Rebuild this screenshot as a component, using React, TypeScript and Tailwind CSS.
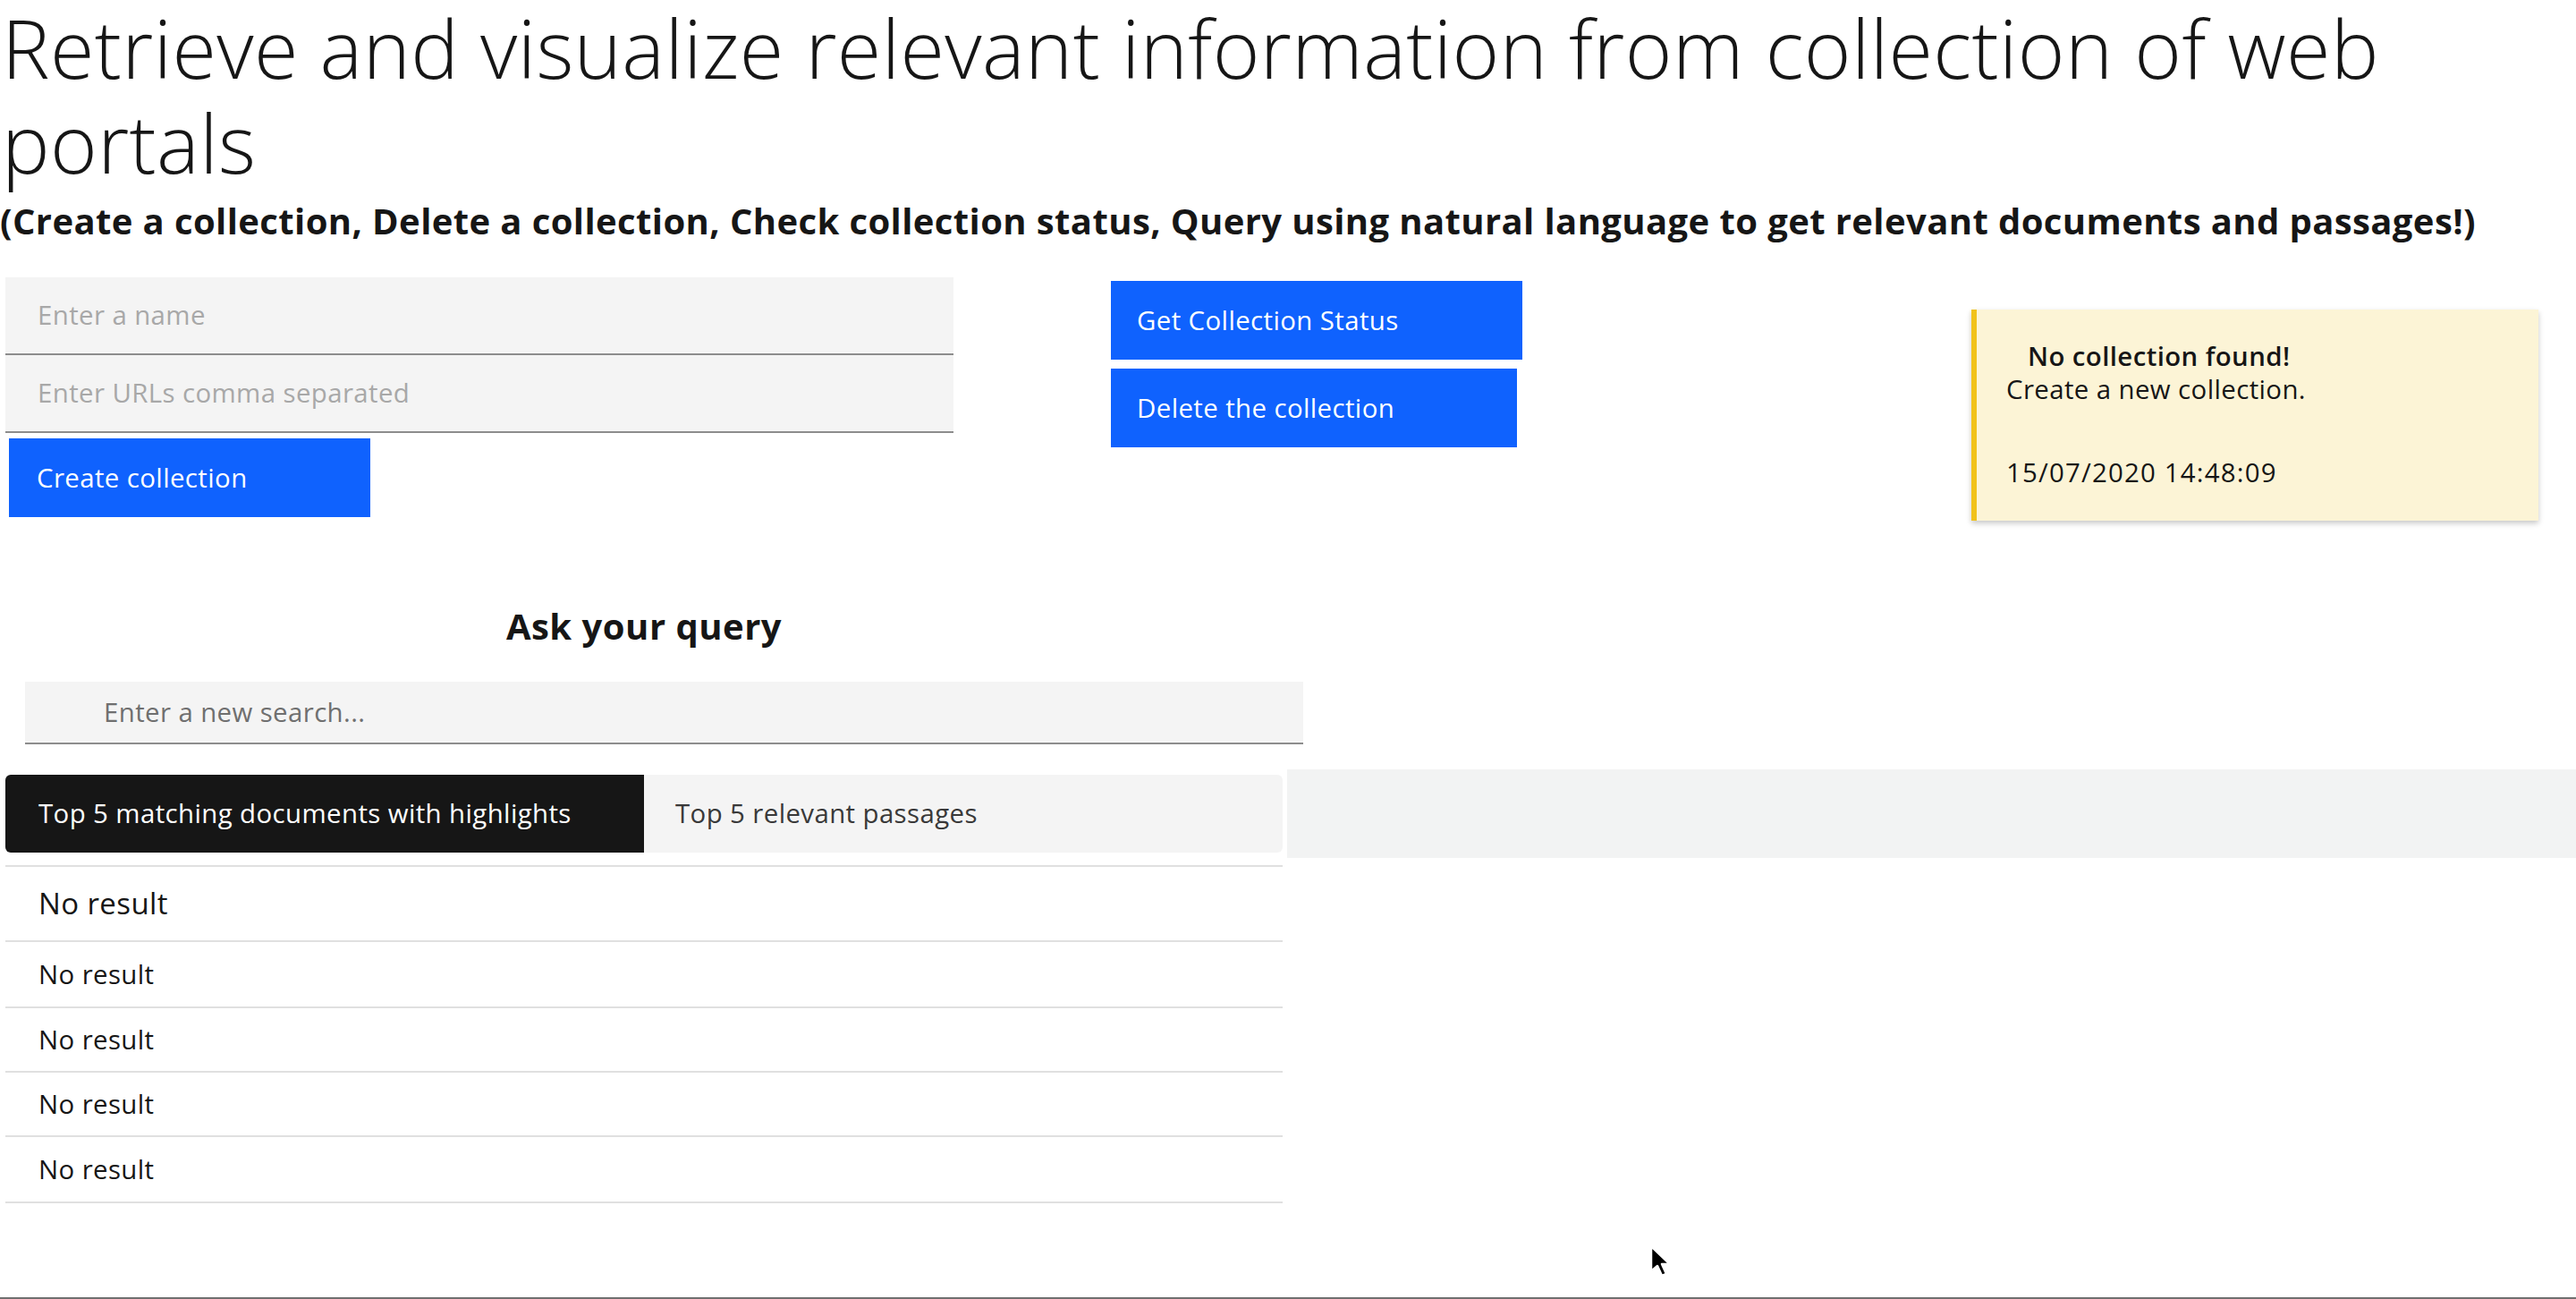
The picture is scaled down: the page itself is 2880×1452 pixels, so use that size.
import React from "react";

export default function App() {
  const rows = [
    { h: "h-[84px]", t: "text-[33px]" },
    { h: "h-[74px]", t: "text-[29.4px]" },
    { h: "h-[72px]", t: "text-[29.4px]" },
    { h: "h-[72px]", t: "text-[29.4px]" },
    { h: "h-[74px]", t: "text-[29.4px]" },
  ];
  return (
    <div className="relative w-[2880px] h-[1452px] overflow-hidden bg-white border-b-2 border-[#6f6f6f] text-[#161616] tracking-[0.4px] font-['Open_Sans','Noto_Sans',sans-serif]">
      <h1 className="m-0 pl-[2px] text-[90px] font-light leading-[106px] tracking-[0.4px]">
        Retrieve and visualize relevant information from collection of web portals
      </h1>
      <p className="mt-[11px] text-[40px] font-bold leading-[48px] tracking-[0.4px] whitespace-nowrap">
        (Create a collection, Delete a collection, Check collection status, Query using natural language to get relevant documents and passages!)
      </p>

      <div className="mt-[39px] flex items-start">
        <div className="ml-[6px] w-[1060px] flex flex-col">
          <div className="h-[87px] bg-[#f4f4f4] border-b-2 border-[#8d8d8d] flex items-center pl-[36px] text-[29.4px] text-[#a8a8a8]">
            Enter a name
          </div>
          <div className="h-[87px] bg-[#f4f4f4] border-b-2 border-[#8d8d8d] flex items-center pl-[36px] text-[29.4px] text-[#a8a8a8]">
            Enter URLs comma separated
          </div>
          <div className="mt-[6px] ml-[4px] w-[404px] h-[88px] bg-[#0f62fe] flex items-center pl-[31px] text-[29.4px] text-white">
            Create collection
          </div>
        </div>

        <div className="ml-[176px] mt-[4px] flex flex-col gap-[10px]">
          <div className="w-[460px] h-[88px] bg-[#0f62fe] flex items-center pl-[29px] text-[29.4px] text-white">
            Get Collection Status
          </div>
          <div className="w-[454px] h-[88px] bg-[#0f62fe] flex items-center pl-[29px] text-[29.4px] text-white">
            Delete the collection
          </div>
        </div>

        <div className="ml-[502px] mt-[36px] w-[634px] h-[236px] bg-[#fcf4d6] border-l-[6px] border-[#f1c21b] shadow-[0_3px_6px_rgba(0,0,0,0.22)] pt-[34px] text-[29.4px] leading-[37px]">
          <div className="pl-[57px] font-semibold">No collection found!</div>
          <div className="pl-[33px]">Create a new collection.</div>
          <div className="pl-[33px] mt-[56px] tracking-[1.2px]">15/07/2020 14:48:09</div>
        </div>
      </div>

      <div className="mt-[94px] w-[1440px] text-center text-[40px] font-bold leading-[48px] tracking-[0.5px]">
        Ask your query
      </div>

      <div className="mt-[38px] ml-[28px] w-[1429px] h-[70px] bg-[#f4f4f4] border-b-2 border-[#8d8d8d] flex items-center pl-[88px] text-[29.4px] text-[#6f6f6f]">
        Enter a new search...
      </div>

      <div className="mt-[28px] flex items-center">
        <div className="ml-[6px] w-[1428px] h-[87px] flex rounded-[6px] overflow-hidden bg-[#f4f4f4] text-[29.4px]">
          <div className="w-[714px] h-full bg-[#161616] text-white flex items-center pl-[37px]">
            Top 5 matching documents with highlights
          </div>
          <div className="flex-1 h-full flex items-center pl-[35px] text-[#393939]">
            Top 5 relevant passages
          </div>
        </div>
        <div className="ml-[5px] flex-1 h-[99px] bg-[#f2f3f3]" />
      </div>

      <div className="mt-[8px] ml-[6px] w-[1428px] border-t-2 border-[#e0e0e0]">
        {rows.map((r, i) => (
          <div key={i} className={`${r.h} ${r.t} border-b-2 border-[#e0e0e0] flex items-center pl-[37px]`}>
            No result
          </div>
        ))}
      </div>

      <svg className="absolute left-[1843px] top-[1391px]" width="26" height="38" viewBox="0 0 26 38">
        <path d="M3 2 L3 30 L10 24 L15 35 L20 33 L15 22 L24 22 Z" fill="#000" stroke="#fff" strokeWidth="2.5" strokeLinejoin="round" />
      </svg>
    </div>
  );
}
